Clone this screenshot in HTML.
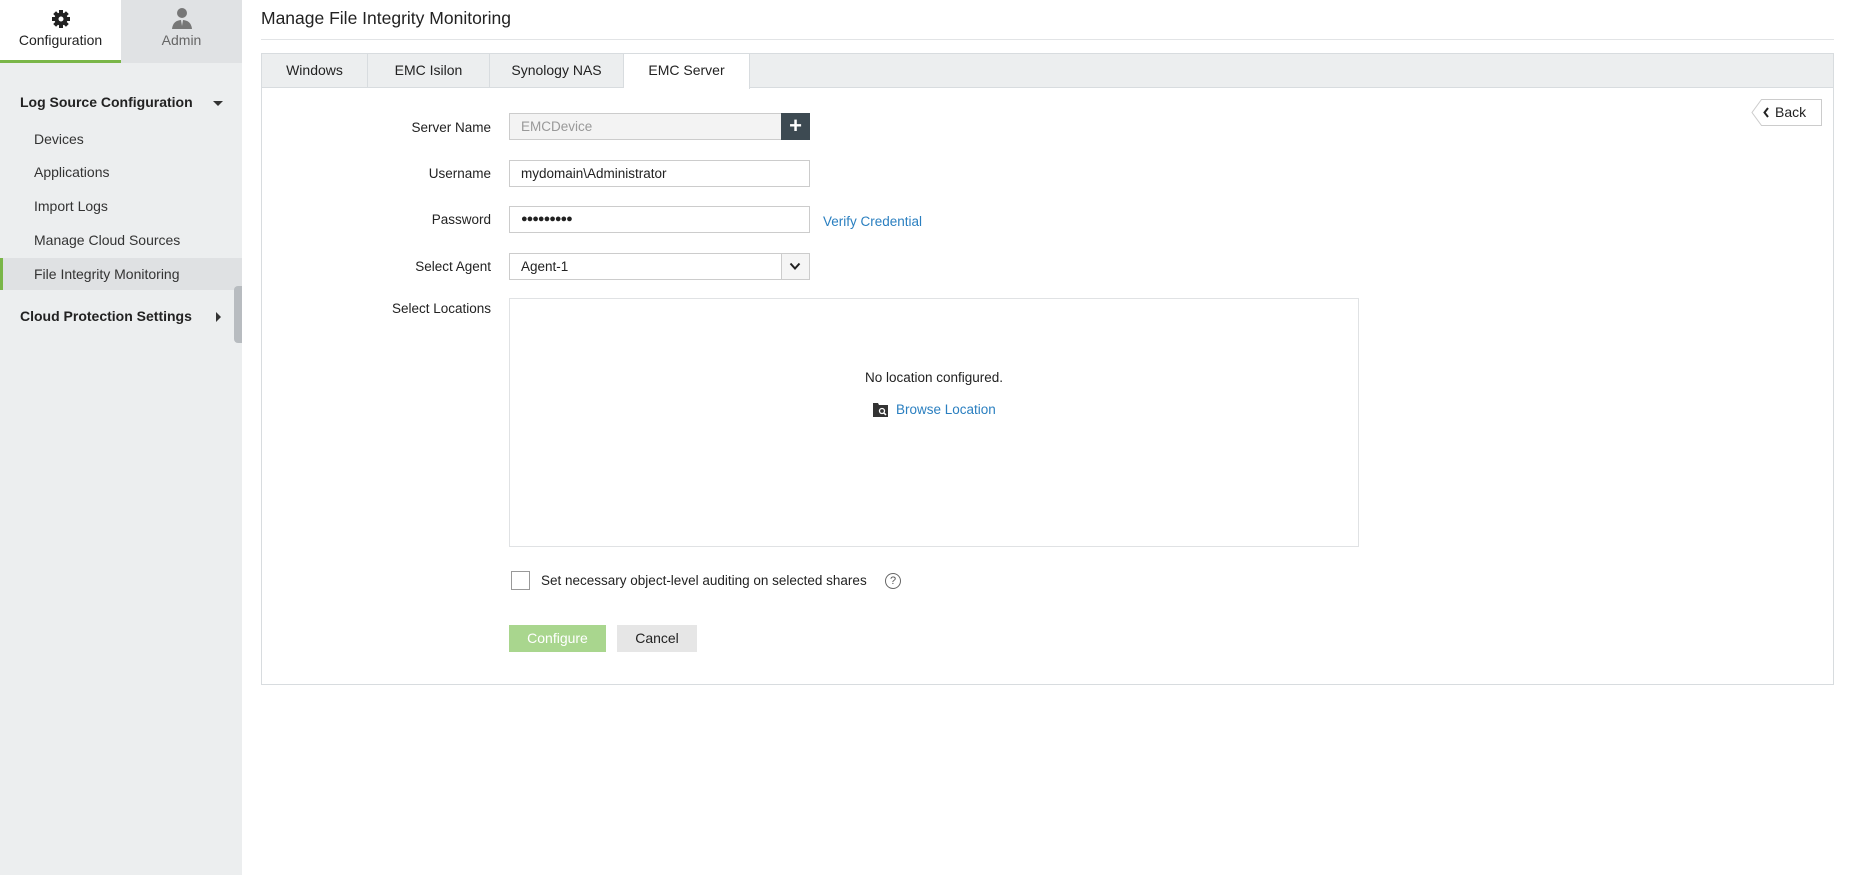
<!DOCTYPE html>
<html><head><meta charset="utf-8"><style>
*{box-sizing:border-box;margin:0;padding:0}
body{width:1854px;height:875px;background:#fff;font-family:"Liberation Sans",sans-serif;color:#222;position:relative;overflow:hidden;font-size:14px}
.a{position:absolute}
.side{left:0;top:0;width:242px;height:875px;background:#eceeef}
.lbl{width:200px;text-align:right;left:291px;font-size:13.5px;color:#222}
.inp{border:1px solid #ccc;background:#fff;height:27px;left:509px;width:301px;padding-left:11px;line-height:25px;font-size:13.5px}
.it{left:34px;font-size:14px;color:#333}
</style></head><body>
<div class="a side"></div>
<div class="a" style="left:0;top:0;width:121px;height:63px;background:#fff;border-bottom:3px solid #7ab648"></div>
<div class="a" style="left:121px;top:0;width:121px;height:63px;background:#e0e2e4"></div>
<svg class="a" style="left:51px;top:9px" width="20" height="20" viewBox="0 0 20 20"><g fill="#222"><circle cx="10" cy="10" r="6.5"/><rect x="8" y="1" width="4" height="18"/><rect x="1" y="8" width="18" height="4"/><rect x="8" y="1" width="4" height="18" transform="rotate(45 10 10)"/><rect x="8" y="1" width="4" height="18" transform="rotate(-45 10 10)"/></g><circle cx="10" cy="10" r="2.5" fill="#fff"/></svg>
<div class="a" style="left:0;width:121px;top:32px;text-align:center;font-size:14px;color:#222">Configuration</div>
<svg class="a" style="left:171px;top:7px" width="22" height="24" viewBox="0 0 22 24"><circle cx="11" cy="6" r="5" fill="#777"/><path d="M1 22 Q2 13 11 13 Q20 13 21 22Z" fill="#777"/><path d="M10 13 L11 19 L12 13Z" fill="#e0e2e4"/></svg>
<div class="a" style="left:121px;width:121px;top:32px;text-align:center;font-size:14px;color:#666">Admin</div>

<div class="a" style="left:20px;top:94px;font-size:14px;font-weight:bold;color:#222">Log Source Configuration</div>
<div class="a" style="left:213px;top:101px;border-left:5px solid transparent;border-right:5px solid transparent;border-top:5px solid #333"></div>
<div class="a it" style="top:131px">Devices</div>
<div class="a it" style="top:164px">Applications</div>
<div class="a it" style="top:198px">Import Logs</div>
<div class="a" style="left:0;top:258px;width:242px;height:32px;background:#dfe1e3;border-left:3px solid #7ab648"></div>
<div class="a it" style="top:232px">Manage Cloud Sources</div>
<div class="a it" style="top:266px">File Integrity Monitoring</div>
<div class="a" style="left:20px;top:308px;font-size:14px;font-weight:bold;color:#222">Cloud Protection Settings</div>
<div class="a" style="left:216px;top:312px;border-top:5px solid transparent;border-bottom:5px solid transparent;border-left:5px solid #333"></div>
<div class="a" style="left:234px;top:286px;width:8px;height:57px;background:#b8bcc0;border-radius:4px 0 0 4px"></div>

<div class="a" style="left:261px;top:8px;font-size:17.5px;color:#222">Manage File Integrity Monitoring</div>
<div class="a" style="left:261px;top:39px;width:1573px;height:1px;background:#e2e4e6"></div>

<div class="a" style="left:261px;top:53px;width:1573px;height:632px;border:1px solid #d8dcdf;background:#fff"></div>
<div class="a" style="left:262px;top:54px;width:1571px;height:34px;background:#eceeef;border-bottom:1px solid #d8dcdf"></div>
<div class="a" style="left:262px;top:54px;width:106px;height:34px;border-right:1px solid #d8dcdf;text-align:center;line-height:33px;font-size:14px">Windows</div>
<div class="a" style="left:368px;top:54px;width:122px;height:34px;border-right:1px solid #d8dcdf;text-align:center;line-height:33px;font-size:14px">EMC Isilon</div>
<div class="a" style="left:490px;top:54px;width:134px;height:34px;border-right:1px solid #d8dcdf;text-align:center;line-height:33px;font-size:14px">Synology NAS</div>
<div class="a" style="left:624px;top:54px;width:126px;height:35px;border-right:1px solid #d8dcdf;background:#fff;text-align:center;line-height:33px;font-size:14px">EMC Server</div>

<svg class="a" style="left:1751px;top:99px" width="72" height="27" viewBox="0 0 72 27"><path d="M10.5 0.5 H70.5 V26.5 H10.5 L1 13.5Z" fill="#fff" stroke="#ccc"/><path d="M17 9 L13.5 13.5 L17 18" stroke="#222" stroke-width="2" fill="none"/></svg>
<div class="a" style="left:1775px;top:104px;font-size:14px">Back</div>

<div class="a lbl" style="top:120px">Server Name</div>
<div class="a inp" style="top:113px;background:#f3f3f3;color:#999">EMCDevice</div>
<div class="a" style="left:781px;top:113px;width:29px;height:27px;background:#3d4a52;color:#fff;text-align:center;font-size:22px;line-height:26px;font-weight:bold">+</div>

<div class="a lbl" style="top:166px">Username</div>
<div class="a inp" style="top:160px">mydomain\Administrator</div>
<div class="a lbl" style="top:212px">Password</div>
<div class="a inp" style="top:206px;font-size:11px;letter-spacing:-1px">●●●●●●●●●</div>
<div class="a" style="left:823px;top:214px;font-size:13.5px;color:#2a7fc0">Verify Credential</div>
<div class="a lbl" style="top:259px">Select Agent</div>
<div class="a inp" style="top:253px">Agent-1</div>
<div class="a" style="left:781px;top:253px;width:29px;height:27px;border:1px solid #ccc;background:#f5f5f5"></div>
<svg class="a" style="left:789px;top:262px" width="12" height="9" viewBox="0 0 12 9"><path d="M1.5 1.5 L6 6.5 L10.5 1.5" stroke="#222" stroke-width="2" fill="none"/></svg>

<div class="a lbl" style="top:301px">Select Locations</div>
<div class="a" style="left:509px;top:298px;width:850px;height:249px;border:1px solid #e0e2e4"></div>
<div class="a" style="left:700px;width:468px;top:370px;text-align:center;font-size:13.5px">No location configured.</div>
<svg class="a" style="left:873px;top:402px" width="15" height="15" viewBox="0 0 15 15"><path d="M0 1 H5 L6 3 H15 V15 H0Z" fill="#333"/><circle cx="9" cy="9" r="2.5" stroke="#fff" stroke-width="1.3" fill="none"/><path d="M10.8 10.8 L13 13" stroke="#fff" stroke-width="1.5"/></svg>
<div class="a" style="left:896px;top:402px;font-size:13.5px;color:#2a7fc0">Browse Location</div>

<div class="a" style="left:511px;top:571px;width:19px;height:19px;border:1px solid #999;background:#fff"></div>
<div class="a" style="left:541px;top:573px;font-size:13.5px">Set necessary object-level auditing on selected shares</div>
<div class="a" style="left:885px;top:573px;width:16px;height:16px;border:1px solid #666;border-radius:50%;font-size:11px;text-align:center;line-height:14px;color:#555">?</div>

<div class="a" style="left:509px;top:625px;width:97px;height:27px;background:#a9d68e;color:#fff;text-align:center;line-height:27px;font-size:14px">Configure</div>
<div class="a" style="left:617px;top:625px;width:80px;height:27px;background:#e6e6e6;color:#222;text-align:center;line-height:27px;font-size:14px">Cancel</div>
</body></html>
